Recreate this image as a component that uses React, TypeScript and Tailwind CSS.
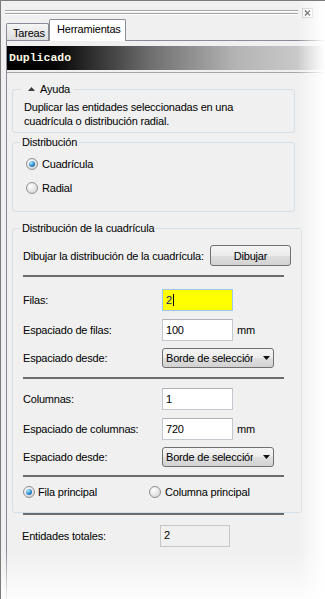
import React from "react";

function Radio({ checked = false }: { checked?: boolean }) {
  return (
    <span className="flex h-[12px] w-[12px] shrink-0 items-center justify-center rounded-full border border-[#8f8f8f] bg-[radial-gradient(circle_at_35%_30%,#ffffff,#e2e2e2_60%,#c9c9c9)]">
      {checked && (
        <span className="h-[6px] w-[6px] rounded-full bg-[radial-gradient(circle_at_35%_30%,#b4ecff,#2a8ad0_55%,#0a4a88)]" />
      )}
    </span>
  );
}

function TextBox({ value, yellow }: { value: string; yellow?: boolean }) {
  return (
    <div
      className={
        yellow
          ? "flex h-[22px] w-[71px] items-center border border-[#9fc6ee] bg-[#ffff00] pb-[1px] pl-[3px] text-[#14146e]"
          : "flex h-[22px] w-[71px] items-center border border-[#c3c8cf] border-t-[#aeb3ba] bg-white pb-[1px] pl-[3px]"
      }
    >
      {value}
      {yellow && <span className="ml-[1px] h-[12px] w-[1px] bg-black" />}
    </div>
  );
}

function Dropdown() {
  return (
    <div className="flex h-[20px] w-[112px] items-center rounded-[3px] border border-[#707070] bg-[linear-gradient(#f4f4f4,#ececec_50%,#dfdfdf_51%,#d2d2d2)] pl-[3px]">
      <span className="w-[87px] overflow-hidden whitespace-nowrap">Borde de selección</span>
      <svg className="ml-[10px]" width="7" height="4" viewBox="0 0 7 4">
        <path d="M0 0H7L3.5 4Z" fill="#111" />
      </svg>
    </div>
  );
}

function Separator() {
  return <div className="h-[2px] w-[261px] bg-[#6c6c6c]" />;
}

function FieldRow({ label, children }: { label: string; children: React.ReactNode }) {
  return (
    <div className="flex items-center">
      <span className="w-[139px] shrink-0">{label}</span>
      {children}
    </div>
  );
}

export default function App() {
  return (
    <div className="relative h-[599px] w-[325px] overflow-hidden border-l border-t border-[#7c7c7c] bg-[#f0f0f0] font-['Liberation_Sans',Arial,sans-serif] text-[11px] leading-[14px] tracking-[-0.2px] text-black">
      {/* grip strip with close button */}
      <div className="flex h-[18px] items-start pl-[4px] pr-[12px] pt-[7px]">
        <div className="mt-[2px] flex-1">
          <div className="h-[1px] bg-[#a3a3a3]" />
          <div className="h-[1px] bg-white" />
          <div className="mt-[1px] h-[1px] bg-[#a3a3a3]" />
          <div className="h-[1px] bg-white" />
        </div>
        <div className="ml-[4px] flex h-[10px] w-[11px] items-center justify-center border border-[#c9c9c9] bg-[#f6f6f6]">
          <svg width="7" height="6" viewBox="0 0 7 6">
            <path d="M1 0.5L6 5.5M6 0.5L1 5.5" stroke="#333" strokeWidth="1.4" />
          </svg>
        </div>
      </div>

      {/* tabs */}
      <div className="flex h-[21px] items-end pl-[5px]">
        <div className="flex h-[17px] w-[43px] items-center rounded-t-[2px] border border-b-0 border-[#898c95] bg-linear-to-b from-[#f6f6f6] to-[#dcdcdc] pl-[6px] pt-[1px]">
          Tareas
        </div>
        <div className="relative z-10 -mb-[1px] h-[22px] w-[77px] rounded-t-[2px] border border-b-0 border-[#898c95] bg-white pl-[7px] pt-[2px]">
          Herramientas
        </div>
      </div>

      {/* pane */}
      <div className="ml-[5px] h-full border-l border-t border-[#898c95] pt-[5px]">
        <div className="flex h-[24px] items-center bg-[linear-gradient(to_right,#000_0%,#050505_15%,#6e6e6e_45%,#b4b4b4_72%,#d2d2d2_100%)] pl-[2px] font-['Liberation_Mono',monospace] text-[11.5px] font-bold tracking-normal text-[#fbf8e4]">
          Duplicado
        </div>

        <div className="mt-[2px] border-t border-[#a6a6a6] pl-[5px]">
          {/* Ayuda */}
          <fieldset className="mt-[9px] w-[283px] rounded-[3px] border border-[#d5dfe5]">
            <legend className="ml-[8px] flex items-center pl-[7px] pr-[4px]">
              <svg width="7" height="4" viewBox="0 0 7 4">
                <path d="M0 4L3.5 0L7 4Z" fill="#3c3c3c" />
              </svg>
              <span className="ml-[5px]">Ayuda</span>
            </legend>
            <p className="px-[11px] pb-[4px] pt-[4px]">
              Duplicar las entidades seleccionadas en una
              <br />
              cuadrícula o distribución radial.
            </p>
          </fieldset>

          {/* Distribución */}
          <fieldset className="mt-[2px] w-[283px] rounded-[3px] border border-[#d5dfe5]">
            <legend className="ml-[7px] px-[2px]">Distribución</legend>
            <div className="pb-[11px] pl-[13px] pt-[3px]">
              <div className="flex h-[24px] items-center gap-[4px]">
                <Radio checked />
                <span>Cuadrícula</span>
              </div>
              <div className="flex h-[24px] items-center gap-[4px]">
                <Radio />
                <span>Radial</span>
              </div>
            </div>
          </fieldset>

          {/* Distribución de la cuadrícula */}
          <fieldset className="mt-[9px] w-[283px] rounded-[3px] border border-[#d5dfe5]">
            <legend className="ml-[7px] px-[2px]">Distribución de la cuadrícula</legend>
            <div className="px-[10px] pb-[10px] pt-[10px]">
              <div className="flex h-[21px] items-center">
                <span className="w-[187px] shrink-0">Dibujar la distribución de la cuadrícula:</span>
                <div className="flex h-[21px] w-[81px] items-center justify-center rounded-[3px] border border-[#707070] bg-[linear-gradient(#f4f4f4,#ececec_50%,#dfdfdf_51%,#d2d2d2)]">
                  Dibujar
                </div>
              </div>
              <div className="mt-[9px]">
                <Separator />
              </div>

              <div className="mt-[12px]">
                <FieldRow label="Filas:">
                  <TextBox value="2" yellow />
                </FieldRow>
              </div>
              <div className="mt-[8px]">
                <FieldRow label="Espaciado de filas:">
                  <TextBox value="100" />
                  <span className="ml-[4px]">mm</span>
                </FieldRow>
              </div>
              <div className="mt-[7px]">
                <FieldRow label="Espaciado desde:">
                  <Dropdown />
                </FieldRow>
              </div>
              <div className="mt-[9px]">
                <Separator />
              </div>

              <div className="mt-[9px]">
                <FieldRow label="Columnas:">
                  <TextBox value="1" />
                </FieldRow>
              </div>
              <div className="mt-[8px]">
                <FieldRow label="Espaciado de columnas:">
                  <TextBox value="720" />
                  <span className="ml-[4px]">mm</span>
                </FieldRow>
              </div>
              <div className="mt-[7px]">
                <FieldRow label="Espaciado desde:">
                  <Dropdown />
                </FieldRow>
              </div>
              <div className="mt-[8px]">
                <Separator />
              </div>

              <div className="mt-[5px] flex h-[20px] items-center">
                <div className="flex w-[126px] items-center gap-[3px]">
                  <Radio checked />
                  <span>Fila principal</span>
                </div>
                <div className="flex items-center gap-[4px]">
                  <Radio />
                  <span>Columna principal</span>
                </div>
              </div>
            </div>
          </fieldset>
          <div className="ml-[11px]">
            <Separator />
          </div>

          <div className="ml-[10px] mt-[10px] flex items-center">
            <span className="w-[138px] shrink-0">Entidades totales:</span>
            <div className="flex h-[22px] w-[70px] items-center border border-[#c6c6c6] bg-[#f0f0f0] pb-[2px] pl-[3px]">
              2
            </div>
          </div>
        </div>
      </div>

      {/* screenshot fades */}
      <div className="pointer-events-none absolute right-0 top-0 h-full w-[28px] bg-linear-to-r from-[rgba(255,255,255,0)] to-white" />
      <div className="pointer-events-none absolute bottom-0 left-0 h-[48px] w-full bg-linear-to-b from-[rgba(255,255,255,0)] to-[rgba(255,255,255,0.85)]" />
    </div>
  );
}
